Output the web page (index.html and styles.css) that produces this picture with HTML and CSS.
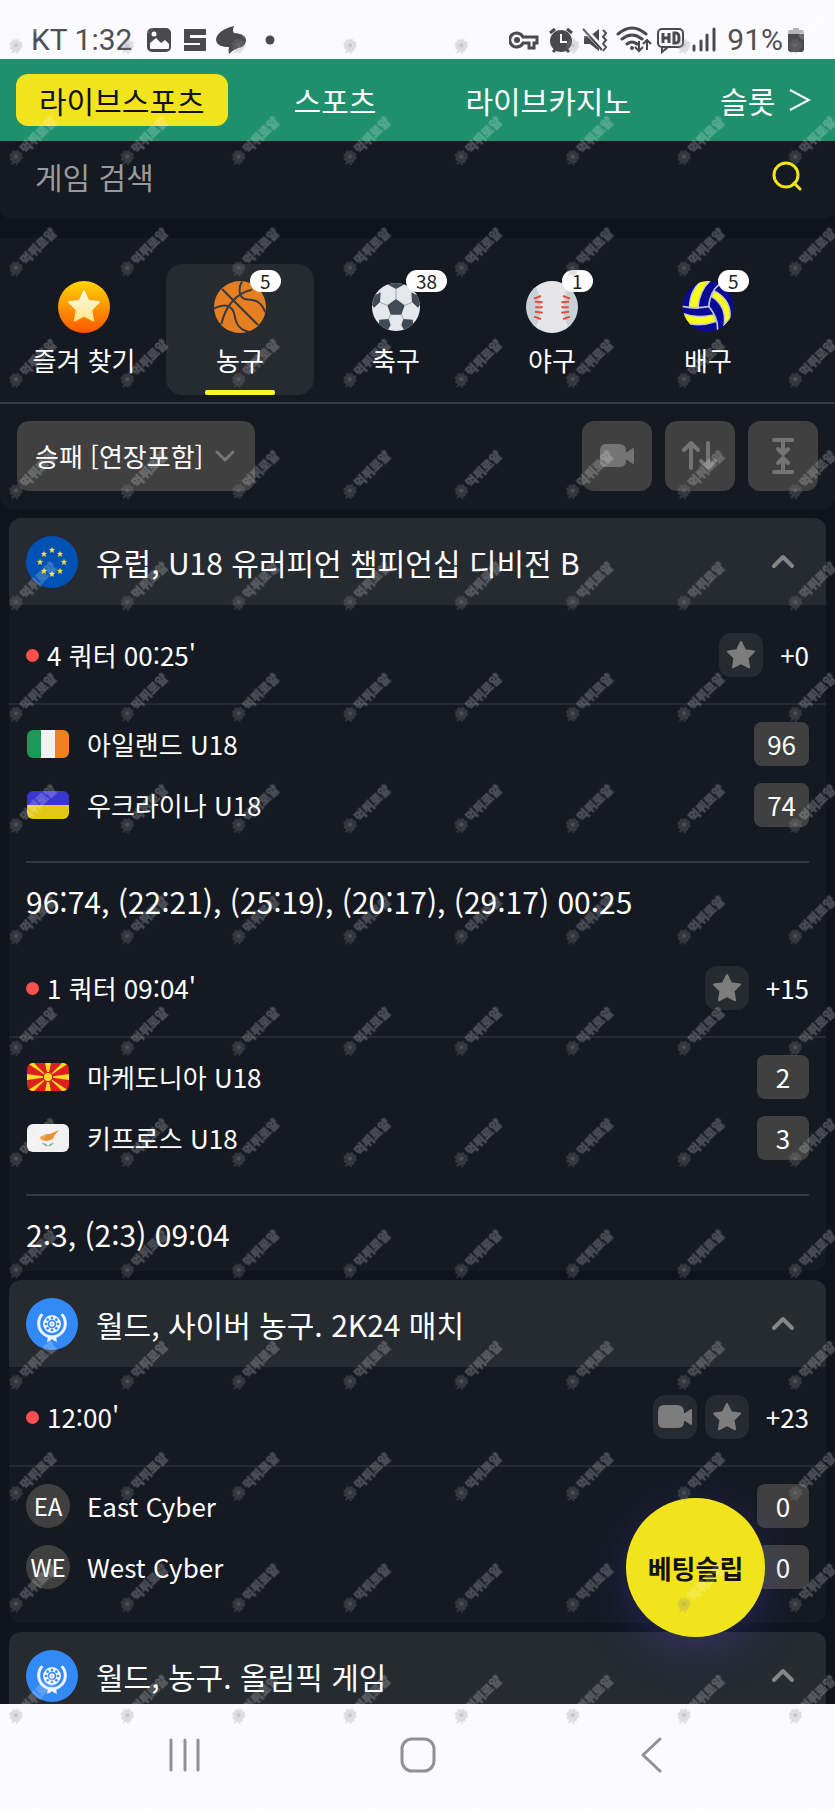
FILE: index.html
```html
<!DOCTYPE html>
<html lang="ko">
<head>
  <meta charset="UTF-8" />
  <meta name="viewport" content="width=device-width, initial-scale=1" />
  <title>라이브스포츠</title>
  <link rel="stylesheet" href="styles.css">
</head>
<body>

  <!-- shared icons -->
  <svg class="sprite" aria-hidden="true">
    <symbol id="star" viewBox="0 0 30 30">
      <path d="M15 2l4 8.300 9 1.300-6.500 6.400 1.600 9.300L15 23l-8.100 4.300L8.500 18 2 11.600l9-1.300z" fill="currentColor" stroke="currentColor" stroke-width="2" stroke-linejoin="round"/>
    </symbol>
    <symbol id="camera" viewBox="0 0 36 26">
      <path d="M7 1h13q7 0 7 7v1h1l6-4q1 0 1 1v14q0 1-1 1l-6-4h-1v1q0 6-7 6H7q-6 0-6-6V8q0-7 6-7z" fill="currentColor"/>
    </symbol>
    <symbol id="chevron-up" viewBox="0 0 24 16">
      <path d="M3 12l9-9 9 9" fill="none" stroke="currentColor" stroke-width="4" stroke-linecap="round" stroke-linejoin="round"/>
    </symbol>
    <symbol id="world" viewBox="0 0 156 156">
      <circle cx="78" cy="78" r="78" fill="#3389f5"/>
      <g fill="none" stroke="#eef4ff">
        <path d="M49 49a40 40 0 1 0 58 0" stroke-width="9"/>
        <circle cx="78" cy="78" r="20" stroke-width="14"/>
        <circle cx="78" cy="78" r="5" stroke-width="6"/>
      </g>
      <g fill="#3389f5">
        <circle cx="78" cy="60" r="4"/><circle cx="78" cy="96" r="4"/><circle cx="60" cy="78" r="4"/><circle cx="96" cy="78" r="4"/>
        <circle cx="65" cy="65" r="4"/><circle cx="91" cy="65" r="4"/><circle cx="65" cy="91" r="4"/><circle cx="91" cy="91" r="4"/>
      </g>
      <path d="M66 116l-3 15 9-3 6-5 6 5 9 3-3-15z" fill="#eef4ff"/>
    </symbol>
  </svg>

  <div class="app">
    <div class="status-bar">
      <span class="status-text">KT 1:32</span>
      <svg class="status-left" width="130" height="30" viewBox="0 0 130 30" aria-hidden="true">
        <rect x="2" y="4" width="22" height="22" rx="4" fill="#4a4a4d" stroke="#4a4a4d" stroke-width="2"/>
        <path d="M4 18l6-5 5 5 4-3 4 4v4q0 1-1 1H5q-1 0-1-1z" fill="#fbfaff"/>
        <circle cx="8" cy="9" r="2.500" fill="#fbfaff"/>
        <path d="M38 4h22v6H44v3h10v-0h6v13H38v-6h16v-2H38z" fill="#4a4a4d"/>
        <path d="M88 1q-2 5 0 7 13 1 12 8-1 6-8 7-5 2-9 6-1-4 0-7-13 0-13-8 2-9 18-13z" fill="#4a4a4d"/>
        <circle cx="124" cy="15" r="4.500" fill="#4a4a4d"/>
      </svg>
      <svg class="status-right" width="208" height="30" viewBox="0 0 208 30" aria-hidden="true">
        <g fill="none" stroke="#4a4a4d" stroke-width="3">
          <path d="M14 12a7 7 0 1 0 0 6h6v5h5v-5h3v-6z"/>
          <path d="M41 8l5-4M58 4l5 4M44 27l3-3M60 27l-3-3" stroke-width="3"/>
          <path d="M109 9q14-12 28 0M113 14q10-8 20 0M118 19q5-4 10 0" stroke-linecap="round"/>
          <path d="M130 16v10m-4-4l4 4 4-4M138 25V15m-4 4l4-4 4 4" stroke-width="2"/>
          <rect x="149" y="4" width="25" height="18" rx="4" stroke-width="2"/>
          <path d="M153 22v5l6-5" stroke-width="2"/>
          <path d="M154 8v10M160 8v10M154 13h6M165 8v10h2q3 0 3-5t-3-5z" stroke-width="3"/>
          <path d="M185 25v-4M192 25v-9M198 25V10M205 25V4" stroke-linecap="round"/>
          <path d="M94 5l3 3-3 4 3 3-3 4 3 3-3 4" stroke-width="2"/>
        </g>
        <circle cx="8" cy="15" r="3" fill="#4a4a4d"/>
        <circle cx="52" cy="16" r="11" fill="#4a4a4d"/>
        <path d="M52 9v8h6" fill="none" stroke="#fbfaff" stroke-width="2"/>
        <path d="M75 11h6l9-7v22l-9-7h-6z" fill="#4a4a4d"/>
        <path d="M74 3l20 21" stroke="#fbfaff" stroke-width="5"/>
        <path d="M74 4l19 21" stroke="#4a4a4d" stroke-width="2"/>
        <circle cx="123" cy="23" r="2" fill="#4a4a4d"/>
      </svg>
      <span class="status-text">91%</span>
      <svg width="16" height="26" viewBox="0 0 16 26" aria-hidden="true">
        <path d="M5 1h6v2h3q2 0 2 2v3H0V5q0-2 2-2h3z" fill="#b5b5b8"/>
        <path d="M0 7h16v15q0 3-3 3H3q-3 0-3-3z" fill="#4a4a4d"/>
      </svg>
    </div>

    <nav class="main-nav">
      <a href="#" class="active">라이브스포츠</a>
      <a href="#">스포츠</a>
      <a href="#">라이브카지노</a>
      <a href="#">슬롯</a>
      <button class="nav-next" aria-label="다음">
        <svg width="22" height="24" viewBox="0 0 22 24"><path d="M1 2l19 10L1 22" fill="none" stroke="#fff" stroke-width="2"/></svg>
      </button>
    </nav>

    <main>
      <form class="search">
        <input type="search" placeholder="게임 검색" aria-label="게임 검색">
        <button type="button" aria-label="검색">
          <svg width="30" height="30" viewBox="0 0 30 30"><g fill="none" stroke="#f2e41c" stroke-width="3" stroke-linecap="round"><circle cx="14" cy="14" r="12"/><path d="M22 22l6 6"/></g></svg>
        </button>
      </form>

      <section class="sports-panel">
        <div class="sports">
          <a href="#" class="sport">
            <span class="sport-icon">
              <svg width="52" height="52" viewBox="0 0 156 156">
                <defs><linearGradient id="fav" x1="0" y1="0" x2="0" y2="1"><stop offset="0" stop-color="#ffd500"/><stop offset="1" stop-color="#ff5500"/></linearGradient>
                <linearGradient id="favstar" x1="0" y1="0" x2="0" y2="1"><stop offset="0" stop-color="#fffbe8"/><stop offset="1" stop-color="#ffe58a"/></linearGradient></defs>
                <circle cx="78" cy="78" r="78" fill="url(#fav)"/>
                <path d="M78 30l13 29 33 4-24 24 6 32-28-15-28 15 6-32-24-24 33-4z" fill="url(#favstar)" stroke="url(#favstar)" stroke-width="5" stroke-linejoin="round"/>
              </svg>
            </span>
            <span>즐겨 찾기</span>
          </a>
          <a href="#" class="sport active">
            <span class="sport-icon">
              <svg width="52" height="52" viewBox="0 0 156 156">
                <circle cx="78" cy="78" r="78" fill="#e67e22"/>
                <g fill="none" stroke="#373b40" stroke-width="6"><path d="M24 24l108 108M22 130C34 76 66 36 114 26M84 1c-12 22-9 47 8 53 24 4 46-2 62 40M0 82c34-16 56-10 62 22 4 26 14 44 44 48"/></g>
              </svg>
              <span class="count">5</span>
            </span>
            <span>농구</span>
          </a>
          <a href="#" class="sport">
            <span class="sport-icon">
              <svg width="48" height="48" viewBox="0 0 144 144">
                <clipPath id="ball"><circle cx="72" cy="72" r="72"/></clipPath>
                <g clip-path="url(#ball)">
                  <rect width="144" height="144" fill="#e6e7ec"/>
                  <g fill="#3f4a54"><path d="M72 48l26 19-10 28H56L46 67z"/><path d="M46 4l26 14 26-14-6-10H52zM6 38l20-10-2 30L6 74-4 60zM138 38l-20-10 2 30 18 16 10-14zM22 110l28-2 6 18-10 18H18zM122 110l-28-2-6 18 10 18h28z"/></g>
                  <path d="M72 18v30M24 58l22 9M120 58l-22 9M50 108l6-13M94 108l-6-13" stroke="#9da5ad" stroke-width="3"/>
                </g>
              </svg>
              <span class="count">38</span>
            </span>
            <span>축구</span>
          </a>
          <a href="#" class="sport">
            <span class="sport-icon">
              <svg width="52" height="52" viewBox="0 0 156 156">
                <circle cx="78" cy="78" r="78" fill="#c9d1d7"/>
                <path d="M30 18q28 60 0 120Q78 172 126 138q-28-60 0-120Q78-16 30 18z" fill="#e6e6e8"/>
                <path d="M24 53l21-8M27 62l23 2M28 79h22M27 92l23 3M24 107l21 7M132 53l-21-8M129 62l-23 2M128 79h-22M129 92l-23 3M132 107l-21 7" stroke="#e04f39" stroke-width="6"/>
              </svg>
              <span class="count">1</span>
            </span>
            <span>야구</span>
          </a>
          <a href="#" class="sport">
            <span class="sport-icon">
              <svg width="52" height="52" viewBox="0 0 156 156">
                <clipPath id="volley"><circle cx="78" cy="76" r="76"/></clipPath>
                <g clip-path="url(#volley)" stroke="#c5c7d8" stroke-width="4">
                  <circle cx="78" cy="76" r="80" fill="#0a0a96"/>
                  <g fill="#faff1a"><path d="M22 80C24 40 36 18 60-2h26C62 20 50 44 48 82z"/><path d="M98 30c30 16 50 44 46 82l-18 20c6-38-6-66-38-86z"/><path d="M-2 96c42 16 72 10 97 6l6 20c-27 10-57 12-88 6z"/></g>
                  <path d="M0 76c30 6 60 4 82 0M80 78C82 50 94 24 114 8M80 76c20 24 30 48 26 78" fill="none" stroke-width="5"/>
                </g>
              </svg>
              <span class="count">5</span>
            </span>
            <span>배구</span>
          </a>
        </div>
      </section>

      <section class="filters">
        <label class="market">
          <select aria-label="마켓">
            <option>승패 [연장포함]</option>
          </select>
          <svg width="20" height="14" viewBox="0 0 20 14"><path d="M2 3l8 8 8-8" fill="none" stroke="#777" stroke-width="3" stroke-linecap="round" stroke-linejoin="round"/></svg>
        </label>
        <button class="tool" aria-label="영상"><svg width="36" height="26"><use href="#camera"/></svg></button>
        <button class="tool" aria-label="정렬">
          <svg width="36" height="30" viewBox="0 0 36 30"><path d="M9 27V2M2 9l7-7 7 7M26 2v25M19 20l7 7 7-7" fill="none" stroke="currentColor" stroke-width="4" stroke-linecap="round" stroke-linejoin="round"/></svg>
        </button>
        <button class="tool" aria-label="모두 접기">
          <svg width="24" height="36" viewBox="0 0 24 36"><path d="M3 2h18M12 2v13M7 11l5 5 5-5M3 34h18M12 34V21M7 25l5-5 5 5" fill="none" stroke="currentColor" stroke-width="4" stroke-linecap="round" stroke-linejoin="round"/></svg>
        </button>
      </section>

      <section class="league">
        <header class="league-header">
          <svg width="52" height="52" viewBox="0 0 52 52" color="#fdd94a">
            <circle cx="26" cy="26" r="26" fill="#0052b4"/>
            <use href="#star" x="23" y="11" width="6" height="6"/><use href="#star" x="23" y="35" width="6" height="6"/>
            <use href="#star" x="11" y="23" width="6" height="6"/><use href="#star" x="35" y="23" width="6" height="6"/>
            <use href="#star" x="15" y="15" width="6" height="6"/><use href="#star" x="31" y="15" width="6" height="6"/>
            <use href="#star" x="15" y="32" width="6" height="6"/><use href="#star" x="31" y="32" width="6" height="6"/>
          </svg>
          <h2>유럽, U18 유러피언 챔피언십 디비전 B</h2>
          <button class="toggle" aria-label="접기"><svg width="24" height="16"><use href="#chevron-up"/></svg></button>
        </header>

        <article class="match">
          <div class="match-info">
            <span class="live-dot"></span>
            <span class="time">4 쿼터 00:25'</span>
            <button class="mini" aria-label="즐겨찾기"><svg width="30" height="30"><use href="#star"/></svg></button>
            <a href="#" class="more">+0</a>
          </div>
          <div class="teams">
            <div class="team">
              <span class="flag"><svg width="42" height="28" viewBox="0 0 42 28"><rect width="14" height="28" fill="#1a9a56"/><rect x="14" width="14" height="28" fill="#f2f2f2"/><rect x="28" width="14" height="28" fill="#f0821e"/></svg></span>
              <span class="name">아일랜드 U18</span>
              <span class="score">96</span>
            </div>
            <div class="team">
              <span class="flag"><svg width="42" height="28" viewBox="0 0 42 28"><rect width="42" height="14" fill="#3c36d0"/><rect y="14" width="42" height="14" fill="#e3c916"/></svg></span>
              <span class="name">우크라이나 U18</span>
              <span class="score">74</span>
            </div>
          </div>
          <p class="periods">96:74, (22:21), (25:19), (20:17), (29:17) 00:25</p>
        </article>

        <article class="match">
          <div class="match-info">
            <span class="live-dot"></span>
            <span class="time">1 쿼터 09:04'</span>
            <button class="mini" aria-label="즐겨찾기"><svg width="30" height="30"><use href="#star"/></svg></button>
            <a href="#" class="more">+15</a>
          </div>
          <div class="teams">
            <div class="team">
              <span class="flag"><svg width="42" height="28" viewBox="0 0 42 28"><rect width="42" height="28" fill="#dc1f1f"/><path d="M0 0h7l14 14zM42 0h-7L21 14zM0 28h7l14-14zM42 28h-7L21 14zM18 0h6l-3 14zM18 28h6l-3-14zM0 11v6l21-3zM42 11v6l-21-3z" fill="#fbdc20"/><circle cx="21" cy="14" r="5" fill="#dc1f1f"/><circle cx="21" cy="14" r="4" fill="#fbdc20"/></svg></span>
              <span class="name">마케도니아 U18</span>
              <span class="score">2</span>
            </div>
            <div class="team">
              <span class="flag"><svg width="42" height="28" viewBox="0 0 42 28"><rect width="42" height="28" fill="#f1f1f1"/><path d="M13 13l6-3 4 0 9-4-5 6-1 3-6 2-6-1z" fill="#e98f2e"/><path d="M15 19q3 4 6 3-2-3-6-3zM27 19q-3 4-6 3 2-3 6-3z" fill="#7fae96"/></svg></span>
              <span class="name">키프로스 U18</span>
              <span class="score">3</span>
            </div>
          </div>
          <p class="periods">2:3, (2:3) 09:04</p>
        </article>
      </section>

      <section class="league">
        <header class="league-header">
          <svg width="52" height="52"><use href="#world"/></svg>
          <h2>월드, 사이버 농구. 2K24 매치</h2>
          <button class="toggle" aria-label="접기"><svg width="24" height="16"><use href="#chevron-up"/></svg></button>
        </header>
        <article class="match">
          <div class="match-info">
            <span class="live-dot"></span>
            <span class="time">12:00'</span>
            <button class="mini" aria-label="영상"><svg width="36" height="26"><use href="#camera"/></svg></button>
            <button class="mini" aria-label="즐겨찾기"><svg width="30" height="30"><use href="#star"/></svg></button>
            <a href="#" class="more">+23</a>
          </div>
          <div class="teams">
            <div class="team">
              <span class="initials">EA</span>
              <span class="name">East Cyber</span>
              <span class="score">0</span>
            </div>
            <div class="team">
              <span class="initials">WE</span>
              <span class="name">West Cyber</span>
              <span class="score">0</span>
            </div>
          </div>
        </article>
      </section>

      <section class="league">
        <header class="league-header">
          <svg width="52" height="52"><use href="#world"/></svg>
          <h2>월드, 농구. 올림픽 게임</h2>
          <button class="toggle" aria-label="접기"><svg width="24" height="16"><use href="#chevron-up"/></svg></button>
        </header>
      </section>
    </main>

    <button class="bet-slip">베팅슬립</button>

    <div class="system-nav">
      <button aria-label="최근 앱"><svg width="36" height="36" viewBox="0 0 36 36"><path d="M4 3v30M18 3v30M31 3v30"/></svg></button>
      <button aria-label="홈"><svg width="36" height="36" viewBox="0 0 36 36"><rect x="2" y="2" width="32" height="32" rx="10"/></svg></button>
      <button aria-label="뒤로"><svg width="36" height="36" viewBox="0 0 36 36"><path d="M28 2L11 18l17 16"/></svg></button>
    </div>

    <!-- repeating site mark over the whole screen -->
    <svg class="watermark" width="100%" height="100%" aria-hidden="true">
      <defs>
        <pattern id="mark" width="334" height="334" patternUnits="userSpaceOnUse" patternTransform="scale(0.33333)">
          <circle cx="48" cy="136" r="17" fill="#8c8c8c" fill-opacity=".26"/>
          <circle cx="48" cy="136" r="18" fill="none" stroke="#8c8c8c" stroke-opacity=".2" stroke-width="5" stroke-dasharray="8 6"/>
          <circle cx="48" cy="136" r="6" fill="#8c8c8c" fill-opacity=".3"/>
          <path d="M40 152l-5 7M52 153l-3 8" stroke="#8c8c8c" stroke-opacity=".26" stroke-width="6"/>
          <text class="mark-text" transform="translate(77 128) rotate(-45)">먹튀로얄</text>
        </pattern>
      </defs>
      <rect width="100%" height="100%" fill="url(#mark)"/>
    </svg>
  </div>

</body>
</html>
```

FILE: styles.css
```css
* {
  box-sizing: border-box;
}

body {
  margin: 0;
  background: #0f141c;
  color: #fff;
  font-family: "Noto Sans CJK KR", "Noto Sans", sans-serif;
  font-size: 26px;
  line-height: 38px;
}

a {
  color: inherit;
  text-decoration: none;
}

button {
  padding: 0;
  border: none;
  background: none;
  color: inherit;
  font: inherit;
  cursor: pointer;
}

svg {
  display: block;
  flex-shrink: 0;
}

.sprite {
  display: none;
}

.app {
  position: relative;
  display: flex;
  flex-direction: column;
  height: 100vh;
  overflow: hidden;
}

/* status bar */
.status-bar {
  display: flex;
  align-items: center;
  height: 59px;
  padding: 20px 31px 0;
  background: #fbfaff;
  color: #4f4f52;
  flex-shrink: 0;
}

.status-text {
  font-family: Roboto, sans-serif;
  font-size: 30px;
}

.status-left {
  margin-left: 14px;
  margin-right: auto;
}

.status-right {
  margin-right: 10px;
}

.status-text + svg:last-child {
  margin-left: 5px;
}

/* main menu */
.main-nav {
  display: flex;
  align-items: center;
  gap: 43px;
  height: 82px;
  padding: 0 16px;
  background: #20906c;
  font-size: 30px;
  flex-shrink: 0;
}

.main-nav a {
  padding: 5px 23px;
  line-height: 42px;
  border-radius: 12px;
  white-space: nowrap;
}

.main-nav .active {
  background: #f2e41c;
  color: #111;
}

.nav-next {
  margin-left: auto;
  margin-right: 8px;
}

.main-nav a:nth-child(4) {
  padding-right: 0;
  margin-right: -43px;
}

main {
  flex: 1;
  min-height: 0;
  overflow-y: auto;
  scrollbar-width: none;
}

/* search */
.search {
  display: flex;
  align-items: center;
  height: 78px;
  padding: 0 33px 8px 35px;
  background: #151921;
  border-radius: 0 0 12px 12px;
}

.search input {
  flex: 1;
  min-width: 0;
  padding: 0;
  border: none;
  outline: none;
  background: none;
  color: #fff;
  font: inherit;
  font-size: 30px;
}

.search input::placeholder {
  color: #999;
}

/* sports */
.sports-panel {
  margin-top: 19px;
  padding: 26px 10px 7px;
  background: #151921;
  border-bottom: 2px solid #36393e;
}

.sports {
  display: flex;
  gap: 8px;
}

.sport {
  position: relative;
  display: flex;
  flex-direction: column;
  align-items: center;
  gap: 8px;
  width: 148px;
  height: 131px;
  padding-top: 17px;
  border-radius: 16px;
}

.sport.active {
  background: #262a31;
}

.sport.active::after {
  content: "";
  position: absolute;
  bottom: 0;
  width: 70px;
  height: 5px;
  border-radius: 2px;
  background: #fff433;
}

.sport-icon {
  position: relative;
  display: flex;
  align-items: center;
  justify-content: center;
  width: 52px;
  height: 52px;
}

.count {
  position: absolute;
  top: -11px;
  left: 36px;
  padding: 0 10px;
  border-radius: 11px;
  background: #fff;
  color: #222;
  font-size: 19px;
  line-height: 22px;
}

/* filters */
.filters {
  display: flex;
  gap: 13px;
  padding: 17px 17px 18px;
  background: #151921;
  border-radius: 0 0 12px 12px;
}

.market {
  display: grid;
  align-items: center;
  margin-right: auto;
}

.market select,
.market svg {
  grid-area: 1 / 1;
}

.market select {
  height: 70px;
  padding: 0 53px 0 18px;
  border: none;
  border-radius: 12px;
  appearance: none;
  background: #404040;
  color: #fff;
  font: inherit;
}

.market svg {
  justify-self: end;
  margin-right: 20px;
  pointer-events: none;
}

.tool {
  display: flex;
  align-items: center;
  justify-content: center;
  width: 70px;
  height: 70px;
  border-radius: 12px;
  background: #404040;
  color: #747474;
}

/* leagues */
.league {
  margin: 9px 9px 0;
  background: #151921;
  border-radius: 12px;
  overflow: hidden;
}

.league-header {
  display: flex;
  align-items: center;
  gap: 18px;
  height: 87px;
  padding: 0 31px 0 17px;
  background: #262a31;
}

.league-header h2 {
  flex: 1;
  margin: 0;
  font-size: 30px;
  font-weight: 400;
}

.toggle {
  color: #858585;
}

.match-info {
  display: flex;
  align-items: center;
  gap: 8px;
  height: 100px;
  padding: 2px 17px 0;
  border-bottom: 2px solid #262a31;
}

.live-dot {
  width: 13px;
  height: 13px;
  border-radius: 50%;
  background: #ff5050;
}

.time {
  flex: 1;
}

.mini {
  display: flex;
  align-items: center;
  justify-content: center;
  width: 44px;
  height: 44px;
  border-radius: 12px;
  background: #262a31;
  color: #7d7d7d;
}

.more {
  margin-left: 9px;
}

.teams {
  display: flex;
  flex-direction: column;
  gap: 17px;
  padding: 17px 17px 34px;
}

.team {
  display: flex;
  align-items: center;
  gap: 17px;
}

.flag,
.initials {
  display: flex;
  align-items: center;
  justify-content: center;
  width: 44px;
  height: 44px;
}

.flag svg {
  border-radius: 6px;
}

.initials {
  border-radius: 50%;
  background: #404040;
  font-size: 24px;
}

.name {
  flex: 1;
}

.score {
  min-width: 52px;
  padding: 3px 13px;
  border-radius: 8px;
  background: #404040;
  text-align: center;
}

.periods {
  margin: 0 17px;
  padding: 18px 0 17px;
  border-top: 2px solid #36393b;
  font-size: 30px;
  line-height: 40px;
}

/* bet slip */
.bet-slip {
  position: absolute;
  right: 70px;
  bottom: 172px;
  width: 139px;
  height: 139px;
  border-radius: 50%;
  background: #f2e41c;
  box-shadow: 0 12px 44px rgba(66, 66, 190, 0.35);
  color: #111;
  font-weight: 700;
}

/* phone buttons */
.system-nav {
  display: flex;
  align-items: center;
  justify-content: space-between;
  height: 105px;
  padding: 0 167px 4px;
  background: #fbfaff;
  flex-shrink: 0;
}

.system-nav svg {
  fill: none;
  stroke: #919193;
  stroke-width: 3;
  stroke-linecap: round;
  stroke-linejoin: round;
}

.watermark {
  position: absolute;
  inset: 0;
  pointer-events: none;
}

.mark-text {
  fill: #fff;
  fill-opacity: 0.14;
  stroke: #fff;
  stroke-opacity: 0.13;
  stroke-width: 4px;
  font-size: 36px;
  font-weight: 700;
}
```
